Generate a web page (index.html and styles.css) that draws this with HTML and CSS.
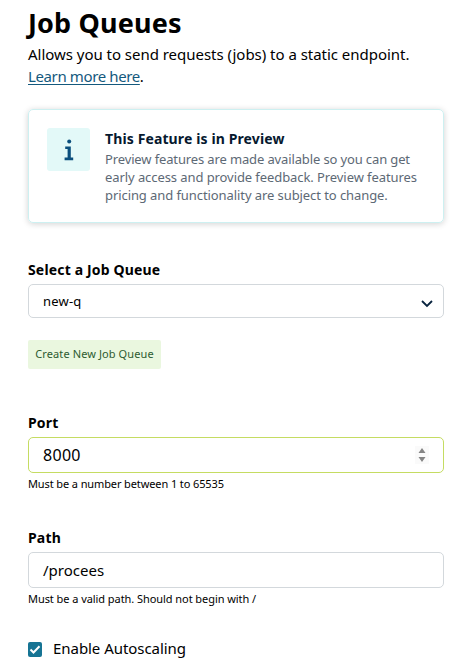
FILE: index.html
```
<!DOCTYPE html>
<html lang="en">
<head>
<meta charset="utf-8">
<title>Job Queues</title>
<link rel="stylesheet" href="styles.css">
</head>
<body>
<main class="page">
  <h1 class="title">Job Queues</h1>
  <p class="intro">Allows you to send requests (jobs) to a static endpoint.<br><a class="link" href="#">Learn more here</a>.</p>

  <section class="notice">
    <div class="notice-icon">
      <svg width="10" height="22" viewBox="0 0 10 22"><circle cx="5.2" cy="2.4" r="2"/><path d="M1.2 7.4h5.6v11.2H9.2v2.6H.6v-2.6h3V10H1.2z"/></svg>
    </div>
    <div class="notice-body">
      <h2 class="notice-title">This Feature is in Preview</h2>
      <p class="notice-text"><span class="tight">Preview features are made available so you can get</span><br>early access and provide feedback. Preview features<br>pricing and functionality are subject to change.</p>
    </div>
  </section>

  <div class="field field-queue">
    <span class="label label-queue">Select a Job Queue</span>
    <div class="control select">
      <span>new-q</span>
      <svg class="chevron" width="12" height="8" viewBox="0 0 12 8"><path d="M1 1l5 5 5-5"/></svg>
    </div>
    <button class="create" type="button">Create New Job Queue</button>
  </div>

  <div class="field field-port">
    <span class="label">Port</span>
    <div class="control input active">
      <span class="port-value">8000</span>
      <span class="spinner"><svg width="8" height="14" viewBox="0 0 8 14"><path d="M4 0l3.5 5h-7zM4 14L.5 9h7z"/></svg></span>
    </div>
    <p class="hint hint-port">Must be a number between 1 to 65535</p>
  </div>

  <div class="field field-path">
    <span class="label">Path</span>
    <div class="control input"><span class="path-value">/procees</span></div>
    <p class="hint">Must be a valid path. Should not begin with /</p>
  </div>

  <div class="check">
    <span class="box"><svg width="14" height="15" viewBox="0 0 14 15"><path d="M2.5 7.5l3 3 6-6.2"/></svg></span>
    <span class="check-label">Enable Autoscaling</span>
  </div>
</main>
</body>
</html>
```

FILE: styles.css
```
* { box-sizing: border-box; }
body {
  margin: 0;
  background: #fff;
  color: #000;
  font-family: "Noto Sans", sans-serif;
  overflow: hidden;
}
h1, h2, p { margin: 0; }
.page {
  display: flex;
  flex-direction: column;
  width: 416px;
  height: 669px;
  margin-left: 28px;
  padding-top: 5px;
  white-space: nowrap;
}
.title { font-size: 27px; line-height: 36px; font-weight: 700; letter-spacing: .15px; }
.intro { margin-top: 2px; font-size: 15px; line-height: 22px; letter-spacing: -.03px; }
.link { color: #14597d; letter-spacing: -.38px; text-underline-offset: 2px; text-decoration-thickness: 1px; }
.notice {
  display: flex;
  gap: 15px;
  height: 114px;
  margin-top: 22px;
  padding: 18px;
  border: 1px solid #cdf0f1;
  border-radius: 5px;
  box-shadow: 0 1px 6px rgba(0, 0, 0, .18);
}
.notice-icon {
  display: flex;
  align-items: center;
  justify-content: center;
  flex: none;
  width: 43px;
  height: 43px;
  border-radius: 3px;
  background: #e3f9f8;
}
.notice-icon svg { fill: #0b4f7d; }
.notice-title { color: #06192f; font-size: 14px; line-height: 22px; font-weight: 700; letter-spacing: .12px; }
.notice-text { color: #5d6975; font-size: 13px; line-height: 18px; letter-spacing: -.08px; }
.tight { letter-spacing: -.13px; }
.field { display: flex; flex-direction: column; }
.field-queue { margin-top: 37px; }
.label { font-size: 14px; line-height: 20px; font-weight: 700; letter-spacing: .16px; }
.control {
  display: flex;
  align-items: center;
  justify-content: space-between;
  margin-top: 4px;
  padding: 0 10px 0 14px;
  border: 1px solid #d3d8dc;
  border-radius: 5px;
}
.select { height: 34px; font-size: 13px; letter-spacing: .2px; }
.chevron { margin-top: 5px; fill: none; stroke: #08233f; stroke-width: 1.8; }
.input { height: 36px; padding-right: 14px; font-size: 15px; }
.port-value { font-size: 16px; letter-spacing: .3px; }
.active { border-color: #c5dc62; }
.spinner {
  display: flex;
  align-items: center;
  justify-content: center;
  width: 14px;
  height: 18px;
  background: #fafafa;
}
.spinner svg { fill: #858585; }
.create {
  align-self: flex-start;
  width: 133px;
  height: 29px;
  margin-top: 22px;
  padding: 0 0 2px;
  border: 0;
  border-radius: 2px;
  background: #eaf7df;
  color: #2d5b30;
  font: 11px "Noto Sans", sans-serif;
  letter-spacing: .1px;
}
.field-port { margin-top: 44px; }
.hint { margin-top: 3px; font-size: 11px; line-height: 16px; letter-spacing: -.06px; }
.hint-port { letter-spacing: -.11px; }
.field-path { margin-top: 36px; }
.check { display: flex; align-items: center; gap: 11px; margin-top: 30px; }
.box { display: flex; width: 14px; height: 15px; margin-top: 2px; border-radius: 2px; background: #167494; }
.box svg { fill: none; stroke: #fff; stroke-width: 2; }
.check-label { font-size: 15px; line-height: 22px; letter-spacing: -.05px; }
```
